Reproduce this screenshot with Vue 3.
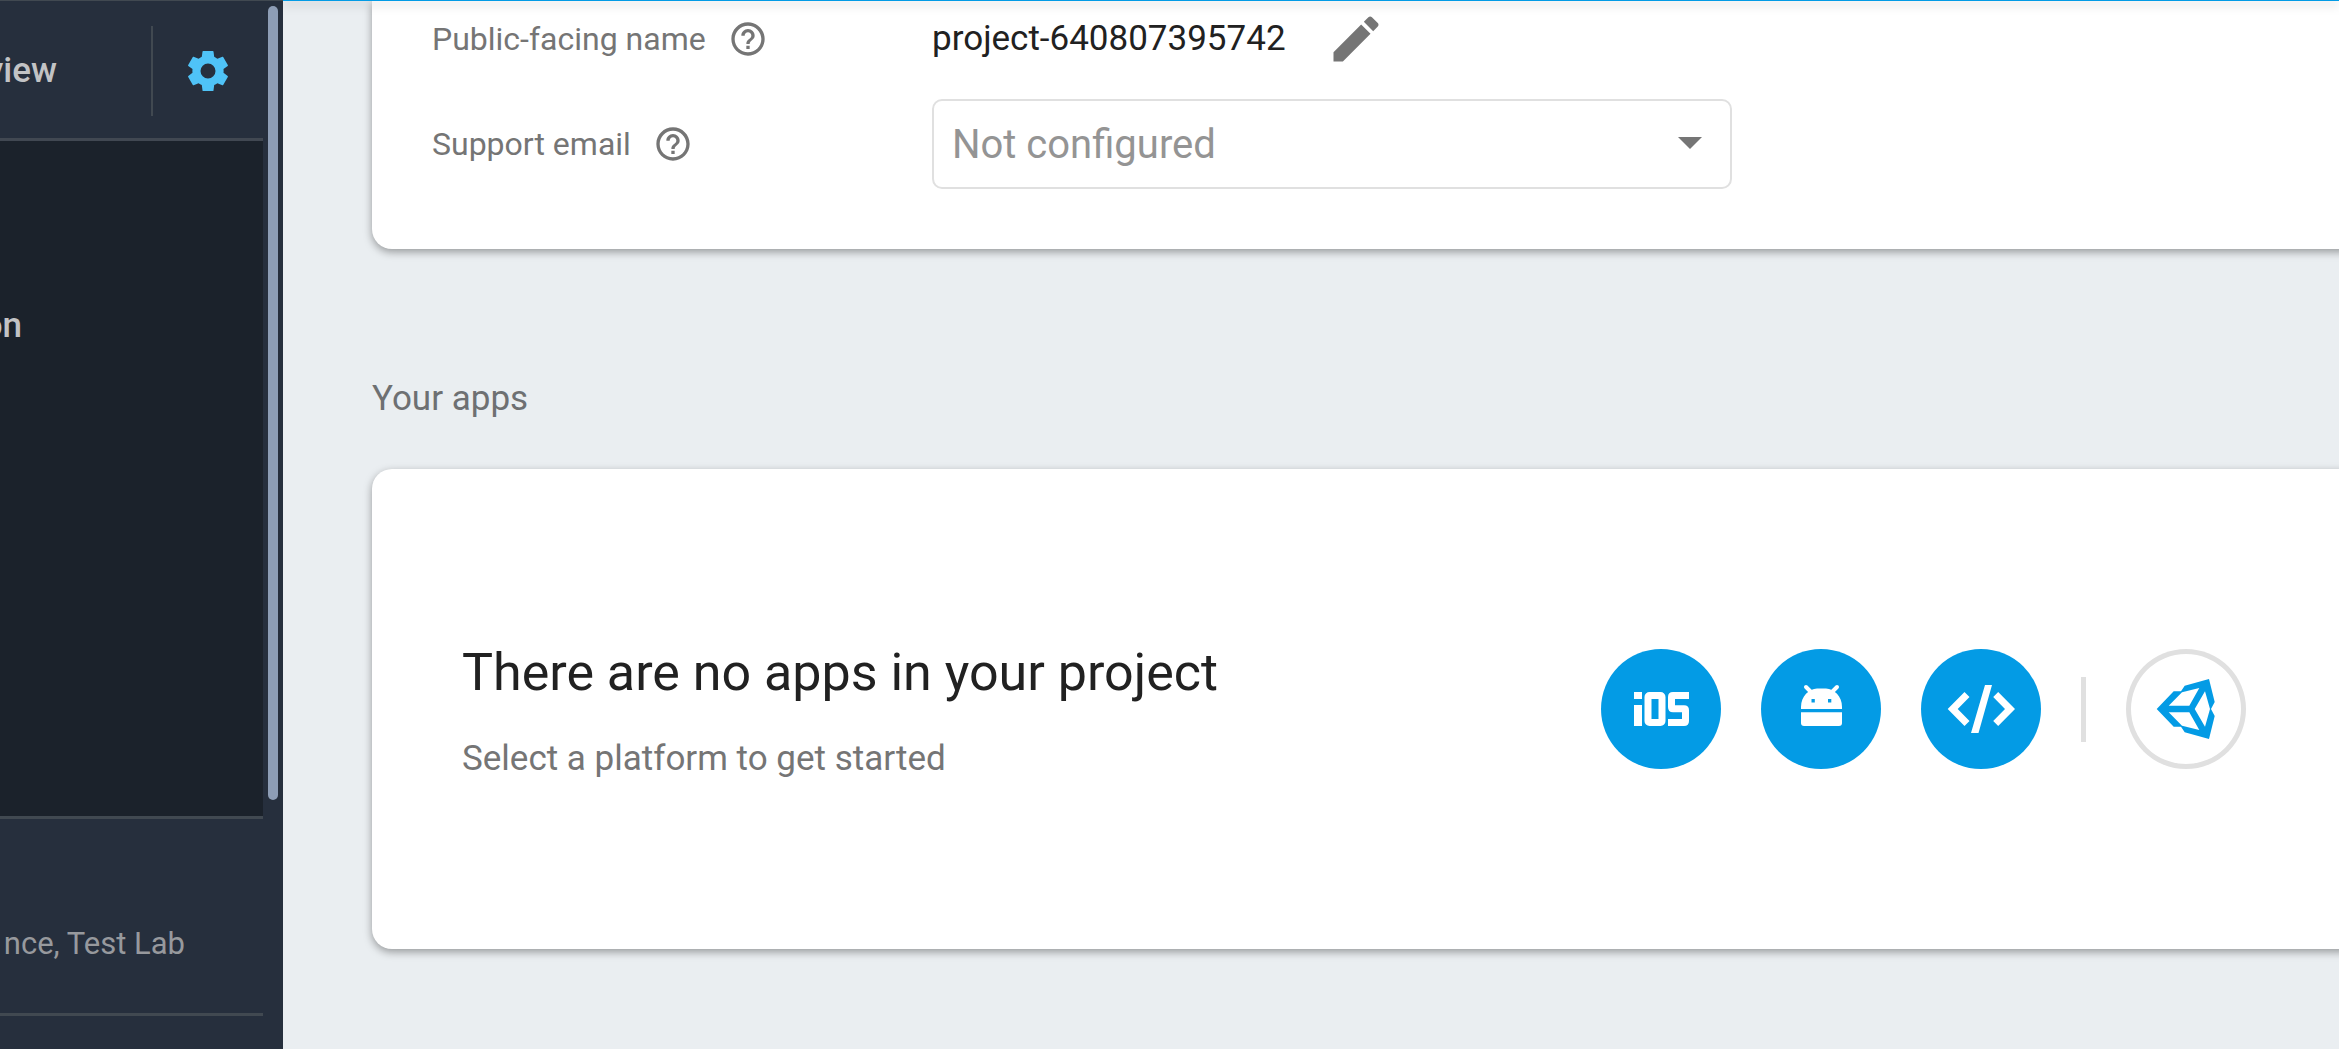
<script setup>
import { ref } from 'vue'

const supportEmail = ref('')
</script>

<template>
  <div class="shell">
    <aside class="sidebar">
      <nav class="nav">
        <div class="overview">
          <a class="clip strong overview-link" href="#overview">view</a>
          <button class="settings" type="button" aria-label="Project settings">
            <svg viewBox="0 0 40 40" width="40" height="40">
              <path
                fill="#4fc3f7"
                fill-rule="evenodd"
                d="M15.2 0h9.6q.6 0 .7.6l.7 5.2q1.700.8 3.200 1.900l5-2q.5-.2.8.3l4.600 8q.3.5-.1.9l-4.200 3.200q.2 1.900 0 3.600l4.200 3.300q.4.400.1.9l-4.600 8q-.3.500-.8.300l-5-2q-1.500 1.100-3.200 1.900l-.7 5.300q-.1.500-.7.500h-9.600q-.6 0-.7-.5l-.7-5.300q-1.700-.8-3.200-1.900l-5 2q-.5.200-.8-.3l-4.600-8q-.3-.5.1-.9l4.200-3.300q-.2-1.700 0-3.600L.3 14.900q-.4-.4-.1-.9l4.600-8q.3-.5.8-.3l5 2q1.500-1.100 3.200-1.900l.7-5.200q.1-.6.7-.6zM20 12.500a7.500 7.500 0 1 0 0 15a7.500 7.500 0 1 0 0-15z"
              />
            </svg>
          </button>
        </div>
        <div class="develop">
          <a class="clip strong develop-link" href="#authentication">on</a>
        </div>
        <div class="quality">
          <p class="clip quality-text">nce, Test Lab</p>
        </div>
      </nav>
      <div class="gutter"><div class="thumb"></div></div>
    </aside>

    <main class="main">
      <div class="topbar"></div>

      <section class="card settings-card">
        <div class="row">
          <div class="label">
            <span>Public-facing name</span>
            <svg class="help" viewBox="0 0 24 24" width="40" height="40">
              <path fill="#757575" d="M11 18h2v-2h-2v2zm1-16C6.480 2 2 6.480 2 12s4.480 10 10 10 10-4.480 10-10S17.520 2 12 2zm0 18c-4.410 0-8-3.590-8-8s3.590-8 8-8 8 3.590 8 8-3.590 8-8 8zm0-14c-2.210 0-4 1.790-4 4h2c0-1.100.9-2 2-2s2 .9 2 2c0 2-3 1.750-3 5h2c0-2.250 3-2.500 3-5 0-2.210-1.790-4-4-4z" />
            </svg>
          </div>
          <span class="value">project-640807395742</span>
          <button class="edit" type="button" aria-label="Edit name">
            <svg viewBox="0 0 24 24" width="60" height="60">
              <path fill="#757575" d="M3 17.250V21h3.750L17.810 9.940l-3.750-3.750L3 17.250zM20.710 7.040c.39-.39.39-1.020 0-1.410l-2.340-2.340c-.39-.39-1.020-.39-1.410 0l-1.830 1.830 3.750 3.750 1.830-1.830z" />
            </svg>
          </button>
        </div>
        <div class="row">
          <div class="label">
            <label for="support-email">Support email</label>
            <svg class="help" viewBox="0 0 24 24" width="40" height="40">
              <path fill="#757575" d="M11 18h2v-2h-2v2zm1-16C6.480 2 2 6.480 2 12s4.480 10 10 10 10-4.480 10-10S17.520 2 12 2zm0 18c-4.410 0-8-3.590-8-8s3.590-8 8-8 8 3.590 8 8-3.590 8-8 8zm0-14c-2.210 0-4 1.790-4 4h2c0-1.100.9-2 2-2s2 .9 2 2c0 2-3 1.750-3 5h2c0-2.250 3-2.500 3-5 0-2.210-1.790-4-4-4z" />
            </svg>
          </div>
          <div class="select-wrap">
            <select id="support-email" v-model="supportEmail" class="select">
              <option value="">Not configured</option>
            </select>
            <svg class="arrow" viewBox="0 0 24 12" width="24" height="12">
              <path fill="#757575" d="M0 0h24L12 12z" />
            </svg>
          </div>
        </div>
      </section>

      <h2 class="section-title">Your apps</h2>

      <section class="card apps-card">
        <div class="intro">
          <h3 class="headline">There are no apps in your project</h3>
          <p class="hint">Select a platform to get started</p>
        </div>
        <div class="platforms">
          <button class="platform" type="button" aria-label="iOS">
            <svg viewBox="0 0 120 120" width="120" height="120">
              <rect x="33" y="43" width="8" height="7" fill="#fff" />
              <rect x="33" y="56" width="8" height="21" fill="#fff" />
              <rect x="47" y="46.500" width="14" height="27" rx="1.500" fill="none" stroke="#fff" stroke-width="7" />
              <path fill="none" stroke="#fff" stroke-width="7" d="M88 46.500H72q-1.500 0-1.500 1.500v10q0 1.800 1.500 1.800H83q1.500 0 1.500 1.500V72q0 1.500-1.500 1.500H67" />
            </svg>
          </button>
          <button class="platform" type="button" aria-label="Android">
            <svg viewBox="0 0 120 120" width="120" height="120">
              <path fill="#fff" fill-rule="evenodd" d="M40 60v-2c0-11 8-18 16-18.500h9c8 .5 16 7.500 16 18.500v2zM50.500 50v3.500h3.300V50zM67 50v3.500h3.300V50z" />
              <path fill="#fff" d="M40 63.300h41V74q0 3-3 3H43q-3 0-3-3z" />
              <path fill="none" stroke="#fff" stroke-width="4" stroke-linecap="round" d="M45 38l7 7M76 38l-7 7" />
            </svg>
          </button>
          <button class="platform" type="button" aria-label="Web">
            <svg viewBox="0 0 120 120" width="120" height="120">
              <path fill="#fff" d="M26.700 60L43.500 43l5 5-11.800 12 11.800 12-5 5zM94 60L77.200 43l-5 5L84 60 72.200 72l5 5zM64 36h7L57.500 84h-7.500z" />
            </svg>
          </button>
          <div class="divider"></div>
          <button class="platform outlined" type="button" aria-label="Unity">
            <svg viewBox="0 0 120 120" width="120" height="120">
              <path
                fill="#039be5"
                fill-rule="evenodd"
                d="M30.700 60L47.700 42.300H55l3.700-5.600L83 30l5.700 23L85 60l3.700 7L83 90l-24.300-6.700-3.700-5.600h-7.300zM42.700 56.700h20.600L73.300 39 56 43.300zM42.700 63.300L56 76.700 73.300 81l-10-17.700zM68.700 60L79 77.700 84 60 79 42.300z"
              />
            </svg>
          </button>
        </div>
      </section>
    </main>
  </div>
</template>

<style>
body {
  margin: 0;
  background: #eaeef1;
}
</style>

<style scoped>
.shell {
  display: flex;
  min-height: 100vh;
  overflow: hidden;
  font-family: Roboto, "Liberation Sans", sans-serif;
  color: #212121;
}
button {
  padding: 0;
  border: 0;
  background: none;
  cursor: pointer;
}
svg {
  display: block;
}
h2, h3, p {
  margin: 0;
  font-weight: 400;
}

.sidebar {
  display: flex;
  flex: none;
  background: #262f3d;
}
.nav {
  width: 263px;
  border-top: 1px solid #414951;
}
.clip {
  display: flex;
  justify-content: flex-end;
  overflow: hidden;
  white-space: nowrap;
}
.strong {
  font-size: 35px;
  line-height: 40px;
  font-weight: 500;
  color: #c2c3c5;
  text-decoration: none;
}
.overview {
  display: flex;
  align-items: center;
  height: 140px;
  padding-top: 3px;
  box-sizing: border-box;
  border-bottom: 3px solid #414852;
}
.overview-link {
  width: 57px;
}
.settings {
  display: flex;
  align-items: center;
  justify-content: center;
  width: 112px;
  height: 90px;
  margin-left: 94px;
  border-left: 2px solid #414951;
}
.develop {
  height: 675px;
  padding-top: 165px;
  box-sizing: border-box;
  background: #1b222b;
}
.develop-link {
  width: 22px;
}
.quality {
  padding: 105px 0 49px;
  border-top: 3px solid #414951;
  border-bottom: 3px solid #414951;
}
.quality-text {
  width: 185px;
  font-size: 31px;
  line-height: 40px;
  color: #97999d;
}
.gutter {
  width: 20px;
  border-top: 1px solid #414951;
}
.thumb {
  width: 10px;
  height: 794px;
  margin: 5px auto 0;
  border-radius: 5px;
  background: #8d9db5;
}

.main {
  flex: 1;
  min-width: 0;
  overflow: hidden;
  background: #eaeef1;
}
.topbar {
  position: relative;
  z-index: 1;
  height: 1px;
  background: #039be5;
  box-shadow: 0 3px 10px rgba(0, 0, 0, 0.5);
}
/* Cards run past the right edge of the viewport. */
.card {
  margin: 0 -20px 0 89px;
  background: #fff;
  box-shadow: 0 3px 8px rgba(0, 0, 0, 0.36);
}
.settings-card {
  display: flex;
  flex-direction: column;
  gap: 30px;
  padding: 8px 60px 60px;
  border-bottom-left-radius: 20px;
}
.row {
  display: flex;
  align-items: center;
}
.label {
  display: flex;
  align-items: center;
  gap: 22px;
  width: 500px;
  font-size: 32px;
  line-height: 40px;
  color: #757575;
}
.value {
  font-size: 35px;
  line-height: 40px;
}
.edit {
  margin-left: 40px;
}
.select-wrap {
  position: relative;
  width: 800px;
}
.select {
  display: block;
  width: 100%;
  height: 90px;
  padding: 2px 80px 0 18px;
  border: 2px solid #e0e0e0;
  border-radius: 10px;
  appearance: none;
  background: #fff;
  font: 400 40px/48px Roboto, "Liberation Sans", sans-serif;
  color: #949494;
}
.arrow {
  position: absolute;
  top: 38px;
  right: 30px;
  pointer-events: none;
}

.section-title {
  margin: 130px 0 50px 89px;
  font-size: 35px;
  line-height: 40px;
  color: #6e7072;
}
.apps-card {
  display: flex;
  align-items: center;
  justify-content: space-between;
  min-height: 480px;
  padding: 0 113px 0 90px;
  box-sizing: border-box;
  border-radius: 20px 0 0 20px;
}
.intro {
  padding-top: 4px;
}
.headline {
  font-size: 52px;
  line-height: 60px;
}
.hint {
  margin-top: 36px;
  font-size: 35px;
  line-height: 40px;
  color: #757575;
}
.platforms {
  display: flex;
  align-items: center;
  gap: 40px;
}
.platform {
  width: 120px;
  height: 120px;
  border-radius: 50%;
  background: #039be5;
}
.outlined {
  background: #fff;
  box-shadow: inset 0 0 0 5px #e0e0e0;
}
.divider {
  width: 5px;
  height: 65px;
  background: #e0e0e0;
}
</style>
